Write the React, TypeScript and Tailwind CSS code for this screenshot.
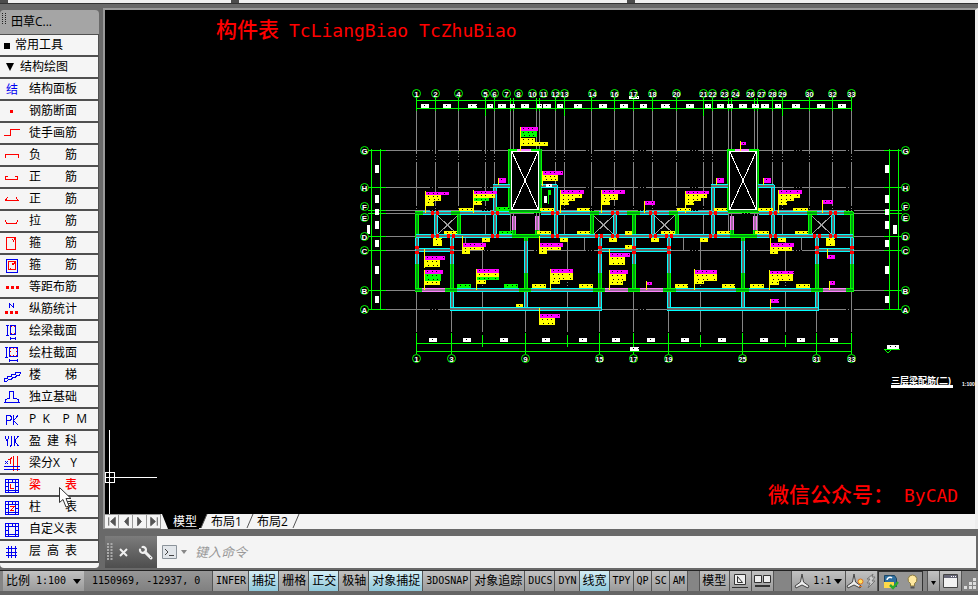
import type { ReactNode } from "react";
import clsx from "clsx";

type Tool = {
  parts: string[];
  wide?: boolean;
  active?: boolean;
  icon: ReactNode;
};

const BLUE = "#0000f0";
const RED = "#ff0000";

const tableFrame = (
  <g stroke={BLUE}>
    <path d="M5.5 4.5h13v13h-13zM8.5 7.5h7v8h-7z" />
    <path d="M8.5 5v2M12.5 5v2M15.5 5v2M8.5 16v1M15.5 16v1M6 7.5h2M6 11.5h2M6 15.5h2M16 7.5h2M16 11.5h2M16 15.5h2" />
  </g>
);

const tools: Tool[] = [
  {
    parts: ["结构面板"],
    icon: <text x="6" y="15" fontSize="12" fill={BLUE} stroke="none">结</text>,
  },
  { parts: ["钢筋断面"], icon: <rect x="10" y="9" width="3" height="3" fill={RED} stroke="none" /> },
  { parts: ["徒手画筋"], icon: <path stroke={RED} d="M4 12.5h6.5v-6H20" /> },
  { parts: ["负", "筋"], icon: <path stroke={RED} d="M5.5 13V9.5h13V13" /> },
  { parts: ["正", "筋"], icon: <path stroke={RED} d="M8 9.5H5.5v3h12v-3H15" /> },
  { parts: ["正", "筋"], icon: <path stroke={RED} d="M5 11.5h14M7.5 8.5l-2 2.5M16 8.5l2 2.5" /> },
  { parts: ["拉", "筋"], icon: <path stroke={RED} d="M5 9.5l2 3h9l2-3" /> },
  { parts: ["箍", "筋"], icon: <path stroke={RED} d="M6.5 4.5h9v12h-9zM12 6.5l2 1M13 8.5l2-3" /> },
  {
    parts: ["箍", "筋"],
    icon: (
      <>
        <path stroke={BLUE} d="M6.5 4.5h11v13h-11z" />
        <path stroke={RED} d="M8.5 6.5h7v8h-7zM12 8.5l1 1M13 10l2-3M9.5 13h1" />
      </>
    ),
  },
  { parts: ["等距布筋"], icon: <path fill={RED} stroke="none" d="M6 9h3v3H6zM11 9h3v3h-3zM16 9h3v3h-3z" /> },
  {
    parts: ["纵筋统计"],
    icon: (
      <>
        <path stroke={BLUE} d="M9.5 9V4.5l4 4V4" />
        <path fill={RED} stroke="none" d="M5 12h3v3H5zM10 12h3v3h-3zM15 12h3v3h-3z" />
      </>
    ),
  },
  {
    parts: ["绘梁截面"],
    icon: (
      <>
        <path stroke={BLUE} d="M6 4.5h3M7.5 4.5v10M6 14.5h3M10.5 4.5h5v9h-5zM10 17.5h6M10.5 16v3M15.5 16v3" />
        <path fill={RED} stroke="none" d="M11 5h1v1h-1zM14 5h1v1h-1zM11 12h1v1h-1zM14 12h1v1h-1z" />
      </>
    ),
  },
  {
    parts: ["绘柱截面"],
    icon: (
      <>
        <path stroke={BLUE} d="M5 4.5h3M6.5 4.5v10M5 14.5h3M9.5 4.5h8v9h-8zM9 17.5h9M9.5 16v3M17.5 16v3" />
        <path
          fill={RED}
          stroke="none"
          d="M10 5h1v1h-1zM13 5h1v1h-1zM16 5h1v1h-1zM10 8h1v1h-1zM16 8h1v1h-1zM10 12h1v1h-1zM13 12h1v1h-1zM16 12h1v1h-1z"
        />
      </>
    ),
  },
  {
    parts: ["楼", "梯"],
    icon: <path stroke={BLUE} d="M4.5 16.5v-3h3v-2h4v-2h4v-2H20M4.5 16.5h2l2-2h3l1-2h3l1-2h3l1-3" />,
  },
  {
    parts: ["独立基础"],
    icon: <path stroke={BLUE} d="M4 15.5h16M5.5 15v-2.5l4-1.5V4.5h4V11l5 1.5V15" />,
  },
  {
    parts: ["P", "K", "", "P", "M"],
    wide: true,
    icon: <path stroke={BLUE} d="M6.5 16V6.5h3.5l1.5 1.5v2L10 11.5H6.5M13.5 6v10M18 6.5l-4.5 5 4.5 4.5" />,
  },
  {
    parts: ["盈", "建", "科"],
    icon: <path stroke={BLUE} d="M5.5 5v2L7 9.5 8.5 7V5M7 9v6M11.5 5v9l-1 1h-1M14.5 5v10M18.5 5l-4 5 4 5" />,
  },
  {
    parts: ["梁分X", "Y"],
    icon: (
      <>
        <path stroke={RED} d="M13.5 3v15M17.5 3v15M8 6.5h2M12 4l-2 3v4" />
        <path stroke={BLUE} d="M4 13.5h16M4 16.5h16M5 8l3 3M8 8l-3 3" />
      </>
    ),
  },
  {
    parts: ["梁", "表"],
    active: true,
    icon: (
      <>
        {tableFrame}
        <path stroke={RED} d="M10.5 9v4.5H14" />
      </>
    ),
  },
  {
    parts: ["柱", "表"],
    icon: (
      <>
        {tableFrame}
        <path stroke={RED} d="M10 9.5h4l-3 4h3" />
      </>
    ),
  },
  { parts: ["自定义表"], icon: tableFrame },
  {
    parts: ["层", "高", "表"],
    icon: <path stroke={BLUE} d="M8.5 5v12M11.5 5v12M15.5 5v12M6 7.5h11M6 11.5h11M6 14.5h11" />,
  },
];

function ToolPalette() {
  return (
    <aside className="flex w-[99px] shrink-0 flex-col pt-[6px] text-black">
      <div className="flex h-6 items-center rounded-t bg-[#a5a5a5] pl-[2px] text-xs">
        <svg width="4" height="14" className="mb-2 mr-[5px]" stroke="#222" strokeDasharray="1 1">
          <path d="M.5 2v11M3.5 2v11" />
        </svg>
        <h1>田草C...</h1>
      </div>
      <div className="flex flex-col border-r border-t border-[#505050] bg-[#f5f5f5] text-xs leading-none">
        <button className="flex h-[22px] items-center border-b-2 border-[#505050] pl-1">
          <span className="mr-[5px] mt-px size-[6px] bg-black" />
          常用工具
        </button>
        <button className="flex h-[22px] items-center border-b-2 border-[#505050] pl-[6px]">
          <svg width="8" height="8" className="mr-[6px]">
            <path d="M0 0h8L4 8z" />
          </svg>
          结构绘图
        </button>
        {tools.map((t, i) => (
          <button key={i} className="flex h-[22px] items-center border-b-2 border-[#505050]">
            <svg width="22" height="20" className="mr-[7px] shrink-0" fill="none" shapeRendering="crispEdges">
              {t.icon}
            </svg>
            <span
              className={clsx("flex justify-between", t.wide ? "w-[58px]" : "w-12", t.active && "font-medium text-[#ff0000]")}
            >
              {t.parts.map((p, j) => (
                <span key={j}>{p}</span>
              ))}
            </span>
          </button>
        ))}
      </div>
      <div className="h-[5px] rounded-b bg-[#f5f5f5]" />
    </aside>
  );
}

/* ---------- drawing data ---------- */

const topAxes: [number, string][] = [
  [416, "1"], [435, "2"], [458, "4"], [485, "5"], [494, "6"], [506, "7"], [518, "8"],
  [532, "10"], [543, "11"], [555, "12"], [564, "13"], [592, "14"], [614, "16"], [633, "17"],
  [652, "18"], [676, "20"], [703, "21"], [712, "22"], [724, "23"], [735, "24"], [750, "26"],
  [761, "27"], [772, "28"], [782, "29"], [809, "30"], [832, "32"], [851, "33"],
];
const bottomAxes: [number, string][] = [
  [416, "1"], [451, "3"], [525, "9"], [599, "15"], [633, "17"], [668, "19"], [742, "25"],
  [816, "31"], [851, "33"],
];
const sideAxes: [number, number, string][] = [
  [150, 150, "G"], [187, 187, "H"], [210, 206, "F"], [213, 217, "E"],
  [236, 236, "D"], [250, 250, "C"], [290, 290, "B"], [309, 309, "A"],
];

const gridX = [
  416, 435, 458, 485, 494, 510, 513, 536, 539, 555, 564, 591, 614, 633, 652, 676, 703, 712,
  728, 731, 754, 757, 772, 782, 809, 832, 851,
];
const lowerGridX = [416, 451, 482, 525, 567, 599, 633, 668, 700, 742, 785, 816, 851];

const dimX = [425, 447, 472, 490, 502, 512, 525, 539, 547, 560, 578, 603, 624, 643, 665, 690, 708, 720, 730, 743, 755, 765, 778, 796, 821, 842];
const dimW = [8, 8, 9, 6, 8, 5, 8, 5, 8, 6, 8, 8, 8, 7, 9, 8, 6, 7, 6, 8, 7, 8, 6, 8, 8, 8];
const bottomDims = [433, 467, 504, 546, 583, 616, 651, 685, 722, 764, 801, 834];

type Kind = "c" | "g" | "m";
const wallColor: Record<Kind, [string, string]> = {
  c: ["#00ffff", "#6b6b6b"],
  g: ["#00ff00", "#00a010"],
  m: ["#ff80ff", "#a070a0"],
};

// [kind, x1, x2, y]
const hWalls: [Kind, number, number, number][] = [
  ["c", 416, 510, 213], ["g", 415, 423, 213], ["g", 451, 460, 213], ["g", 509, 541, 211],
  ["c", 541, 728, 213], ["g", 590, 599, 213], ["g", 627, 640, 213], ["g", 669, 678, 213],
  ["g", 728, 759, 211], ["c", 759, 852, 213], ["g", 807, 817, 213], ["g", 844, 853, 213],
  ["c", 416, 512, 236], ["g", 512, 540, 236], ["c", 540, 730, 236], ["g", 730, 757, 236], ["c", 757, 853, 236],
  ["c", 493, 510, 186], ["c", 541, 557, 186], ["c", 711, 728, 186], ["c", 758, 774, 186],
  ["c", 417, 451, 250], ["c", 600, 668, 250], ["c", 817, 851, 250],
  ["m", 422, 445, 290], ["g", 415, 422, 290], ["g", 445, 457, 290], ["c", 457, 519, 290],
  ["g", 519, 531, 290], ["c", 531, 593, 290], ["g", 593, 605, 290], ["m", 605, 628, 290],
  ["g", 628, 640, 290], ["m", 640, 663, 290], ["g", 663, 676, 290], ["c", 676, 736, 290],
  ["g", 736, 749, 290], ["c", 749, 811, 290], ["g", 811, 823, 290], ["m", 823, 846, 290],
  ["g", 846, 853, 290], ["c", 450, 601, 309], ["c", 667, 818, 309],
];

// [kind, x, y1, y2]
const vWalls: [Kind, number, number, number][] = [
  ["g", 417, 212, 238], ["c", 436, 215, 235], ["g", 459, 213, 235], ["c", 495, 185, 235],
  ["m", 514, 216, 231], ["g", 514, 230, 237], ["m", 537, 216, 231], ["g", 537, 230, 237],
  ["c", 556, 185, 235], ["g", 592, 213, 235], ["c", 615, 215, 235], ["g", 634, 213, 235],
  ["c", 653, 215, 235], ["g", 677, 213, 235], ["c", 713, 185, 235], ["m", 732, 216, 231],
  ["g", 732, 230, 237], ["m", 755, 216, 231], ["g", 755, 230, 237], ["c", 773, 185, 235],
  ["g", 810, 213, 235], ["c", 833, 215, 235], ["g", 852, 212, 238],
  ["c", 417, 238, 265], ["g", 417, 264, 292], ["c", 452, 238, 265], ["g", 452, 264, 290],
  ["c", 452, 292, 311], ["g", 526, 236, 241], ["c", 526, 241, 273], ["g", 526, 273, 290],
  ["c", 526, 292, 309], ["c", 600, 238, 273], ["g", 600, 273, 290], ["c", 600, 292, 311],
  ["c", 634, 238, 265], ["g", 634, 264, 290], ["c", 669, 238, 273], ["g", 669, 273, 290],
  ["c", 669, 292, 311], ["g", 743, 236, 241], ["c", 743, 241, 273], ["g", 743, 273, 290],
  ["c", 743, 292, 309], ["c", 817, 238, 265], ["g", 817, 264, 290], ["c", 817, 292, 311],
  ["c", 852, 238, 265], ["g", 852, 264, 292],
  ["g", 510, 149, 212], ["g", 540, 149, 212], ["g", 729, 149, 212], ["g", 757, 149, 212],
];

const columnsE = [432, 437, 492, 497, 552, 557, 612, 617, 650, 655, 710, 715, 770, 775, 830, 835];
const columnsD = [...columnsE, 448, 453, 596, 601, 666, 671, 814, 819];
const columnsC = [416, 451, 599, 633, 668, 816, 851];

const ink: Record<string, string> = { m: "#ff00ff", y: "#ffff00", g: "#00ff00", w: "#ffffff" };

// leader x, top, bottom, then rows of [ink, y, width, height]
type Note = [number, number, number, [string, number, number, number][]];
const notes: Note[] = [
  [425, 191, 213, [["m", 192, 24, 3], ["y", 195, 16, 6], ["y", 201, 9, 5]]],
  [473, 190, 213, [["m", 191, 24, 3], ["y", 194, 22, 4], ["g", 198, 16, 3], ["y", 201, 9, 4]]],
  [498, 178, 185, [["m", 178, 8, 5]]],
  [520, 127, 151, [["m", 127, 18, 4], ["g", 131, 17, 6], ["y", 138, 15, 4], ["y", 142, 28, 4]]],
  [542, 171, 186, [["m", 171, 21, 4], ["y", 175, 16, 6]]],
  [560, 190, 213, [["m", 190, 24, 4], ["y", 194, 22, 4], ["y", 198, 15, 3], ["y", 201, 9, 4]]],
  [601, 190, 213, [["m", 190, 24, 4], ["y", 194, 17, 6], ["y", 200, 9, 5]]],
  [644, 201, 213, [["m", 201, 11, 4]]],
  [685, 191, 213, [["m", 191, 24, 3], ["y", 194, 22, 4], ["y", 198, 16, 3], ["y", 201, 9, 4]]],
  [716, 178, 185, [["m", 178, 8, 5]]],
  [763, 178, 185, [["m", 178, 8, 5]]],
  [740, 141, 151, [["m", 142, 6, 3]]],
  [778, 190, 213, [["m", 190, 24, 4], ["y", 194, 22, 4], ["y", 198, 16, 3], ["y", 201, 9, 4]]],
  [822, 200, 213, [["m", 200, 11, 4]]],
  [462, 236, 254, [["m", 243, 24, 4], ["y", 247, 22, 3], ["y", 250, 8, 4]]],
  [539, 236, 254, [["m", 243, 24, 4], ["y", 247, 22, 3], ["y", 250, 8, 4]]],
  [770, 236, 254, [["m", 243, 24, 4], ["y", 247, 22, 4], ["y", 251, 8, 3]]],
  [424, 249, 268, [["m", 256, 21, 4], ["y", 260, 16, 7]]],
  [424, 270, 290, [["m", 270, 19, 4], ["g", 274, 17, 7], ["y", 281, 16, 4]]],
  [476, 269, 290, [["m", 269, 23, 4], ["y", 273, 23, 4], ["g", 277, 23, 3], ["y", 280, 10, 4]]],
  [550, 269, 290, [["m", 269, 23, 4], ["y", 273, 23, 7], ["y", 280, 10, 4]]],
  [609, 249, 265, [["m", 253, 21, 4], ["y", 257, 16, 8]]],
  [609, 270, 290, [["m", 270, 19, 4], ["y", 274, 17, 7], ["y", 281, 14, 4]]],
  [646, 281, 290, [["m", 282, 6, 3]]],
  [694, 269, 290, [["m", 270, 23, 4], ["y", 274, 23, 7], ["y", 281, 10, 3]]],
  [769, 270, 290, [["m", 271, 25, 3], ["y", 274, 24, 7], ["y", 281, 10, 4]]],
  [827, 249, 258, [["m", 255, 8, 4]]],
  [829, 281, 290, [["m", 281, 6, 4]]],
  [770, 299, 309, [["m", 299, 9, 4]]],
  [539, 308, 325, [["m", 314, 21, 4], ["y", 318, 16, 7]]],
];

// loose rebar marks: [ink, x, y, width, height]
const marks: [string, number, number, number, number][] = [
  ["y", 459, 208, 14, 3], ["g", 496, 207, 13, 4], ["y", 540, 208, 14, 3], ["y", 577, 208, 13, 3],
  ["y", 677, 208, 14, 3], ["y", 714, 208, 13, 3], ["y", 758, 208, 15, 3], ["y", 793, 208, 15, 3],
  ["y", 444, 231, 13, 3], ["g", 499, 231, 13, 3], ["y", 537, 231, 14, 3], ["y", 577, 231, 13, 3],
  ["y", 625, 231, 7, 4], ["y", 661, 231, 14, 3], ["y", 717, 231, 13, 3], ["y", 755, 231, 14, 3],
  ["y", 795, 231, 13, 3], ["g", 457, 284, 14, 4], ["g", 504, 284, 14, 4], ["y", 532, 284, 14, 4],
  ["y", 579, 284, 14, 4], ["y", 675, 284, 13, 4], ["y", 722, 284, 13, 4], ["y", 750, 284, 14, 4],
  ["y", 796, 284, 14, 4], ["y", 433, 238, 9, 8], ["y", 482, 238, 8, 4], ["y", 560, 238, 8, 4],
  ["y", 609, 238, 8, 4], ["y", 651, 238, 8, 4], ["y", 700, 238, 8, 4], ["y", 778, 238, 8, 4],
  ["y", 826, 238, 9, 8], ["y", 625, 245, 7, 4], ["y", 516, 304, 7, 3],
  ["w", 546, 184, 6, 3], ["w", 544, 196, 3, 7], ["g", 548, 190, 3, 5], ["g", 548, 195, 1, 9],
  ["w", 629, 96, 10, 3], ["w", 630, 347, 9, 4], ["w", 887, 345, 12, 4],
];

const sideDims = [[165, 8], [195, 8], [209, 6], [221, 8], [240, 7], [266, 8], [296, 7]];

function Mark({ c, x, y, w, h }: { c: string; x: number; y: number; w: number; h: number }) {
  return (
    <g>
      <rect x={x} y={y} width={w} height={h} fill={ink[c]} />
      {w > 4 && h > 2 && (
        <path
          d={`M${x + 3} ${y + 1.5}H${x + w}${h > 5 ? `M${x + 4} ${y + h - 1.5}H${x + w}` : ""}`}
          stroke="#000"
          strokeDasharray="1 4 1 3 1 6"
        />
      )}
    </g>
  );
}

function Bubble({ x, y, label }: { x: number; y: number; label: string }) {
  return (
    <g>
      <circle cx={x + 0.5} cy={y + 0.5} r="4" fill="#000" stroke="#00ff00" />
      <text x={x + 0.5} y={y + 3.5} fontSize={label.length > 1 ? 7 : 8} textAnchor="middle" fill="#fff" fontWeight="bold">
        {label}
      </text>
    </g>
  );
}

function StairWell({ x }: { x: number }) {
  return (
    <g fill="none">
      <path d={`M${x - 2} 150h31`} stroke="#00ff00" strokeWidth="2" />
      <path d={`M${x + 6} 150h14`} stroke="#ff80ff" strokeWidth="2" />
      <rect x={x + 0.5} y="151.5" width="27" height="58" fill="#000" stroke="#fff" />
      <path d={`M${x + 1} 152l26 57M${x + 27} 152l-26 57`} stroke="#fff" />
    </g>
  );
}

function FloorPlan() {
  return (
    <svg
      viewBox="105 10 870 504"
      preserveAspectRatio="xMinYMin meet"
      className="block min-h-0 w-full flex-1 bg-black"
      fontFamily="'Liberation Sans', 'Noto Sans CJK SC', sans-serif"
    >
      <g shapeRendering="crispEdges">
        <g stroke="#858585" strokeDasharray="44 2 1 2 1 2">
          {gridX.map((x) => (
            <path key={x} d={`M${x + 0.5} 110V236`} />
          ))}
          {lowerGridX.map((x) => (
            <path key={x} d={`M${x + 0.5} 236V334`} />
          ))}
          {sideAxes.map(([y]) => (
            <path key={y} d={`M386 ${y + 0.5}H884`} />
          ))}
          <path d="M584.5 238v12M683.5 238v12M801.5 238v12M465.5 238v12" />
        </g>

        <g stroke="#00ff00" fill="none">
          <path d="M416 100.5H852M416 108.5H852M416 343.5H852M416 351.5H852" />
          {gridX.map((x) => (
            <path key={x} d={`M${x + 0.5} 98V111`} />
          ))}
          <path d="M485.5 108v8M564.5 108v8M703.5 108v8M782.5 108v8" />
          {bottomAxes.map(([x]) => (
            <path key={x} d={`M${x + 0.5} 333V354`} />
          ))}
          <path d="M482.5 335v12M567.5 335v12M700.5 335v12M785.5 335v12" />
          <path d="M371.5 149V310M380.5 149V310M889.5 149V310M898.5 149V310" />
          {sideAxes.map(([y]) => (
            <path key={y} d={`M368 ${y + 0.5}H386M884 ${y + 0.5}H902`} />
          ))}
        </g>

        <g stroke="#a0a0a0">
          {[437, 593, 654, 811].map((x) => (
            <path key={x} d={`M${x} 215l21 20M${x + 21} 215l-21 20`} />
          ))}
        </g>

        {vWalls.map(([k, x, a, b], i) => (
          <g key={i}>
            <path d={`M${x} ${a}V${b}`} stroke={wallColor[k][0]} strokeWidth="4" />
            <path d={`M${x} ${a}V${b}`} stroke={wallColor[k][1]} strokeWidth="2" />
          </g>
        ))}
        {hWalls.map(([k, a, b, y], i) => (
          <g key={i}>
            <path d={`M${a} ${y}H${b}`} stroke={wallColor[k][0]} strokeWidth="4" />
            <path d={`M${a} ${y}H${b}`} stroke={wallColor[k][1]} strokeWidth="2" />
          </g>
        ))}
        <StairWell x={511} />
        <StairWell x={729} />

        {notes.map(([x, top, bottom, rows], i) => (
          <g key={i}>
            {rows.map(([c, y, w, h], j) => (
              <Mark key={j} c={c} x={x} y={y} w={w} h={h} />
            ))}
            <path d={`M${x + 0.5} ${top}V${bottom}`} stroke="#ffff00" />
          </g>
        ))}
        {marks.map(([c, x, y, w, h], i) => (
          <Mark key={i} c={c} x={x} y={y} w={w} h={h} />
        ))}

        <g fill="#ff0000">
          {columnsE.map((x) => (
            <rect key={x} x={x - 1} y="211" width="3" height="4" />
          ))}
          {columnsD.map((x) => (
            <rect key={x} x={x - 1} y="234" width="3" height="4" />
          ))}
          {columnsC.map((x) => (
            <path key={x} d={`M${x - 1} 246h4v3h-4zM${x - 1} 251h4v3h-4z`} />
          ))}
        </g>

        {dimX.map((x, i) => (
          <Mark key={x} c="w" x={x - Math.floor(dimW[i] / 2)} y={104} w={dimW[i]} h={4} />
        ))}
        {bottomDims.map((x) => (
          <Mark key={x} c="w" x={x - 4} y={338} w={8} h={4} />
        ))}
        <g fill="#fff">
          {sideDims.map(([y, h]) => (
            <path key={y} d={`M375 ${y}h4v${h}h-4zM885 ${y}h4v${h}h-4z`} />
          ))}
          <path d="M367 225h3v9h-3zM893 225h4v9h-4z" />
        </g>

        {/* crosshair */}
        <path d="M109.5 430V514M105 477.5H157M105.5 472.5h9v10h-9z" stroke="#fff" fill="none" />
        <path d="M884 349.5h16M885 350l3 3 3-3" stroke="#00ff00" fill="none" />
        <path d="M891 386.5h62" stroke="#fff" strokeWidth="3" />
      </g>

      {topAxes.map(([x, l]) => (
        <Bubble key={x} x={x} y={93} label={l} />
      ))}
      {bottomAxes.map(([x, l]) => (
        <Bubble key={x} x={x} y={358} label={l} />
      ))}
      {sideAxes.map(([, y, l]) => (
        <g key={l}>
          <Bubble x={364} y={y} label={l} />
          <Bubble x={905} y={y} label={l} />
        </g>
      ))}

      <text x="891" y="384" fontSize="9" fill="#fff" fontWeight="bold">三层梁配筋(二)</text>
      <text x="962" y="386" fontSize="5" fill="#fff" fontWeight="bold">1:100</text>

      <g fill="#ff0000" fontSize="21" fontFamily="'DejaVu Sans Mono', 'Noto Sans CJK SC', monospace" fontWeight="500">
        <text x="216" y="37">
          构件表
          <tspan x="289" fontSize="18">TcLiangBiao TcZhuBiao</tspan>
        </text>
        <text x="768" y="502">
          微信公众号：
          <tspan x="904" fontSize="18">ByCAD</tspan>
        </text>
      </g>
    </svg>
  );
}

function Slash({ dark }: { dark?: boolean }) {
  return (
    <svg width="9" height="15" className="shrink-0">
      {dark && <path d="M0 0h8L2 14H0z" />}
      <path d="M8 0L2 14" stroke="#555" fill="none" />
    </svg>
  );
}

function LayoutTabs() {
  return (
    <nav className="flex h-[15px] items-stretch bg-[#f4f4f4] text-xs leading-none text-black">
      {["M4 3v9M11 3L6 7.5l5 4.5z", "M10 3L6 7.5l4 4.5z", "M5 3l4 4.5L5 12z", "M4 3l5 4.5L4 12zM11 3v9"].map((d) => (
        <button key={d} aria-label="切换布局" className="w-[14px] border border-l-0 border-[#999]">
          <svg width="14" height="15" viewBox="0 0 15 15" className="-mt-px" fill="#555" stroke="#555">
            <path d={d} />
          </svg>
        </button>
      ))}
      <svg width="9" height="15" className="ml-px shrink-0">
        <path d="M0 0h9v15H6z" />
      </svg>
      <button className="bg-black px-[2px] text-white">模型</button>
      <Slash dark />
      <button className="px-[3px]">布局1</button>
      <Slash />
      <button className="px-[3px]">布局2</button>
      <Slash />
    </nav>
  );
}

function CommandLine() {
  return (
    <div className="mt-[7px] flex h-8 bg-[#f4f4f4]">
      <div className="flex w-[52px] shrink-0 items-center bg-linear-to-b from-[#7c7c7c] to-[#4e4e4e] pl-[2px]">
        <svg width="6" height="18" stroke="#aaa" strokeDasharray="2 1">
          <path d="M1 0v18M4.5 0v18" strokeWidth="2" />
        </svg>
        <button aria-label="关闭" className="ml-[6px]">
          <svg width="9" height="9" stroke="#f0f0f0" strokeWidth="2">
            <path d="M1 1l7 7M8 1L1 8" />
          </svg>
        </button>
        <button aria-label="自定义" className="ml-[10px]">
          <svg width="15" height="15" fill="none" stroke="#f0f0f0" strokeLinecap="round">
            <path d="M7 7l6 6" strokeWidth="3" />
            <path d="M2 4.5a3 3 0 1 0 2.5-2.5" strokeWidth="2.2" />
            <path d="M12.5 12.5h.1" stroke="#666" />
          </svg>
        </button>
      </div>
      <div className="flex flex-1 items-center pl-[5px]">
        <button aria-label="最近使用的命令" className="mr-2 flex items-center gap-1">
          <svg width="15" height="14" fill="none">
            <path d="M.5.5h14v13H.5z" fill="#e2e6ea" stroke="#8c949b" />
            <path d="M3 4l3 3-3 3M7 10.5h5" stroke="#444" />
          </svg>
          <svg width="6" height="4" fill="#888">
            <path d="M0 0h6L3 4z" />
          </svg>
        </button>
        <input
          aria-label="命令"
          placeholder="键入命令"
          className="h-5 flex-1 bg-transparent text-[13px] italic outline-none placeholder:text-[#999]"
        />
      </div>
    </div>
  );
}

const toggles: [string, boolean][] = [
  ["INFER", false], ["捕捉", true], ["栅格", false], ["正交", true], ["极轴", false],
  ["对象捕捉", true], ["3DOSNAP", false], ["对象追踪", false], ["DUCS", false], ["DYN", false],
  ["线宽", true], ["TPY", false], ["QP", false], ["SC", false], ["AM", false],
];

const cell = "flex h-5 shrink-0 items-center justify-center border-r border-[#555] bg-linear-to-b from-[#c2c2c2] to-[#9a9a9a]";

// Latin labels sit at half the width of the Chinese ones
function StatusLabel({ text }: { text: string }) {
  return <span className={/[A-Z0-9]/.test(text) ? "text-[10px]" : "text-xs"}>{text}</span>;
}

function Caret() {
  return (
    <svg width="8" height="5">
      <path d="M0 0h8L4 5z" />
    </svg>
  );
}

function Compass() {
  return (
    <svg width="16" height="16" fill="#eee" stroke="#444">
      <path d="M8 1l1.5 8L15 13l-1 2-6-3-6 3-1-2 5.5-4z" />
    </svg>
  );
}

function StatusBar() {
  return (
    <footer className="flex h-[25px] shrink-0 items-start border-t border-[#222] bg-[#656565] font-['DejaVu_Sans_Mono','Noto_Sans_CJK_SC',monospace] leading-none text-black">
      <div className="flex h-5 w-full items-center bg-[#858585]">
        <button className={clsx(cell, "ml-[3px] w-[81px] gap-[7px] border-r-0")}>
          <span className="flex items-center gap-[6px]">
            <span className="text-xs">比例</span>
            <span className="text-[10px]">1:100</span>
          </span>
          <Caret />
        </button>
        <div className="flex h-5 w-[129px] shrink-0 items-center whitespace-pre border-r border-[#555] bg-linear-to-b from-[#979797] to-[#808080] pl-2 text-[10px]">
          1150969, -12937, 0
        </div>
        {toggles.map(([t, on]) => (
          <button
            key={t}
            aria-pressed={on}
            className={clsx(
              "flex h-5 shrink-0 items-center border-r border-[#555] bg-linear-to-b pl-[3px] pr-[2px]",
              on ? "from-[#d5eef5] to-[#8fc8da]" : "from-[#c2c2c2] to-[#9a9a9a]"
            )}
          >
            <StatusLabel text={t} />
          </button>
        ))}
        <span className="h-5 w-3 shrink-0 border-r border-[#555]" />
        <button className={clsx(cell, "w-[30px] text-xs")}>模型</button>
        <button aria-label="图纸" className={clsx(cell, "w-[22px]")}>
          <svg width="16" height="16" fill="none" stroke="#333">
            <path d="M2.5 1.5h11v10h-11z" fill="#eee" />
            <path d="M5.5 3.5v6h5zM0 14.5h16" />
          </svg>
        </button>
        <button aria-label="快速查看布局" className={clsx(cell, "w-[22px]")}>
          <svg width="17" height="16" fill="none" stroke="#333">
            <path d="M.5 2.5h7v7h-7zM9.5 2.5h7v7h-7z" fill="#eee" />
            <path d="M1 13h15" strokeWidth="2" />
          </svg>
        </button>
        <span className="h-5 w-[18px] shrink-0 border-r border-[#555]" />
        <button className={clsx(cell, "w-[54px] gap-[3px] text-[10px]")}>
          <Compass />
          1:1
          <Caret />
        </button>
        <button aria-label="注释可见性" className={clsx(cell, "w-8")}>
          <span className="relative">
            <Compass />
            <svg width="7" height="10" className="absolute -right-[2px] top-[5px]" fill="#ffe060" stroke="#e07020">
              <circle cx="3.5" cy="3.5" r="2.5" />
              <path d="M2 8.5h3" />
            </svg>
          </span>
          <svg width="10" height="16" className="ml-1" fill="#ccc" stroke="#777">
            <path d="M7 1L1 6h3L1 10h3l-2 5 7-7H6l3-4H6z" />
          </svg>
        </button>
        <div className="flex h-5 w-[45px] shrink-0 items-center justify-center gap-2 border border-b-0 border-[#333] bg-[#969696]">
          <svg width="16" height="16" fill="none">
            <path d="M1.5 1.5h10l2 3v8h-12z" fill="#2f6f9f" stroke="#1d4766" />
            <path d="M4 6a3 3 0 0 1 5-2" stroke="#fff" strokeWidth="1.5" />
            <path d="M1 8h10v6H1z" fill="#ffd94a" />
            <path d="M7 11l3 3 5-6" stroke="#2eaa2e" strokeWidth="2.5" />
          </svg>
          <svg width="11" height="16" stroke="#8a7a40">
            <path d="M5.5 1a4.5 4.5 0 0 1 2 8.5V12h-4V9.500A4.500 4.500 0 0 1 5.500 1z" fill="#ffe9a0" />
            <path d="M3.5 13.5h4" stroke="#555" strokeWidth="2" />
          </svg>
        </div>
        <span className="h-5 w-[5px] shrink-0 border-r border-[#555]" />
        <button aria-label="状态栏菜单" className={clsx(cell, "w-3 pt-1")}>
          <svg width="5" height="4">
            <path d="M0 0h5L2.5 4z" />
          </svg>
        </button>
        <button aria-label="全屏显示" className={clsx(cell, "w-[22px]")}>
          <svg width="15" height="14" fill="none">
            <path d="M.5.5h14v13H.5z" fill="#f2f2f2" stroke="#444" />
            <path d="M1 2.5h13" stroke="#667" strokeWidth="3" />
            <path d="M8 2.5h5" stroke="#fff" strokeDasharray="1 1" />
          </svg>
        </button>
        <svg width="12" height="12" className="ml-auto mr-[2px] mt-[6px] shrink-0" fill="#ddd">
          <path d="M9 0h3v3H9zM5 4h3v3H5zM9 4h3v3H9zM0 8h3v3H0zM5 8h3v3H5zM9 8h3v3H9z" />
        </svg>
      </div>
    </footer>
  );
}

export default function App() {
  return (
    <div className="relative flex h-screen flex-col overflow-hidden bg-[#696969] font-['Open_Sans','Noto_Sans_CJK_SC',sans-serif]">
      <div className="flex h-1 shrink-0 gap-2 border-b border-[#333] bg-[#4c4c4c] pl-2">
        <div className="w-[23%] bg-[#f0f0f0]" />
        <div className="w-[40%] bg-[#f0f0f0]" />
        <div className="flex-1 bg-[#f0f0f0]" />
      </div>
      <main className="flex min-h-0 flex-1 gap-1">
        <ToolPalette />
        <div className="flex min-w-0 flex-1 flex-col pt-1">
          <div className="flex min-h-0 flex-1 flex-col border-l-2 border-r-3 border-t-2 border-l-[#999] border-r-[#eee] border-t-[#999]">
            <FloorPlan />
            <LayoutTabs />
          </div>
          <div className="mb-[2px] pl-[2px] pr-[2px]">
            <CommandLine />
          </div>
        </div>
      </main>
      <StatusBar />
      <svg width="14" height="22" className="pointer-events-none absolute left-[59px] top-[487px]">
        <path d="M.5.5v15l3.5-3 3 7.5 3-1-3-7.5h5z" fill="#fff" stroke="#333" />
      </svg>
    </div>
  );
}
